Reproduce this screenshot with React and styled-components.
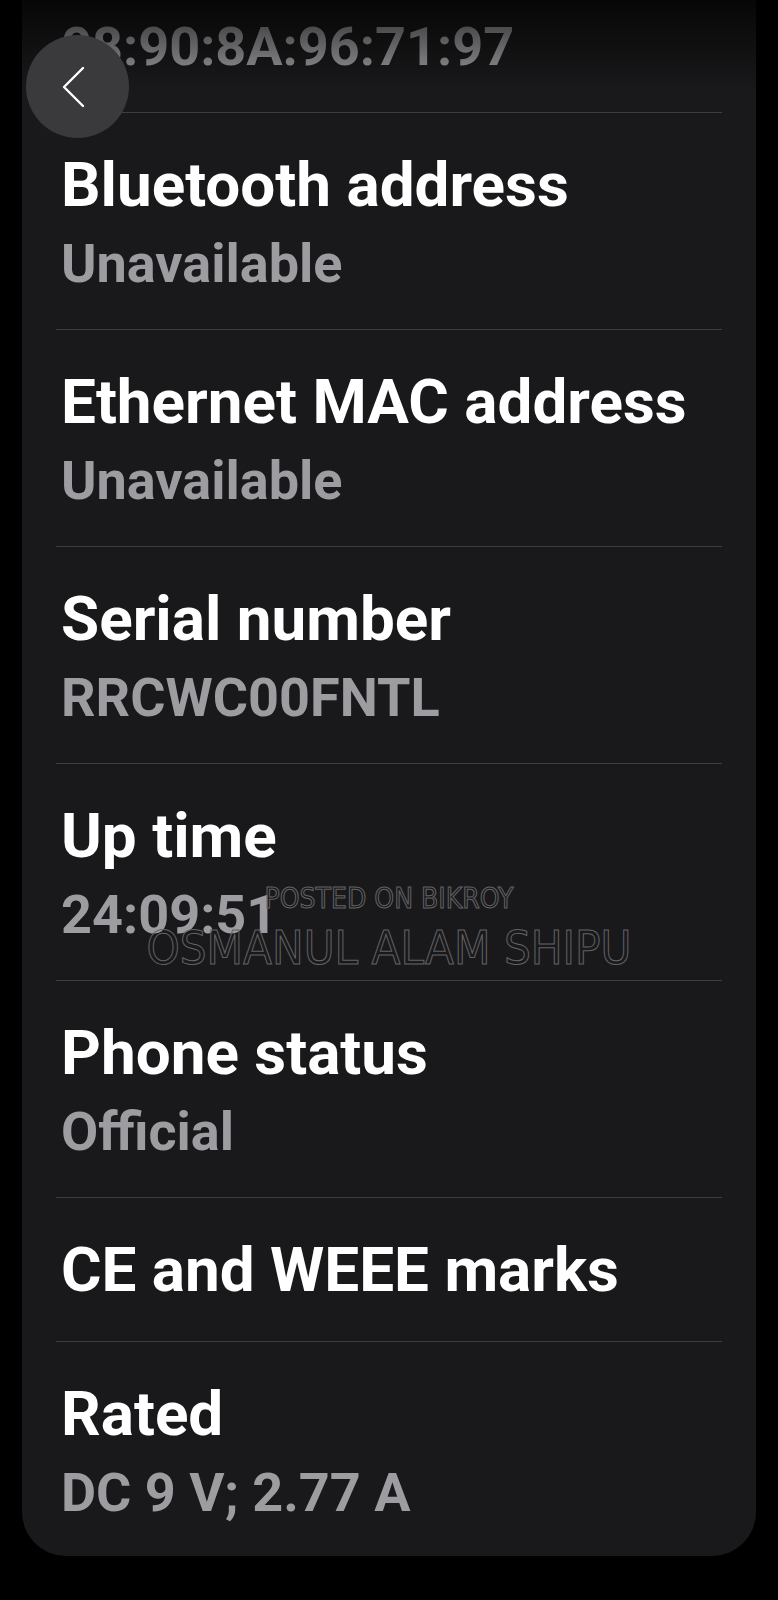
import React from 'react';
import styled, { createGlobalStyle } from 'styled-components';

const GlobalStyle = createGlobalStyle`
  html, body {
    margin: 0;
    padding: 0;
    background: #000;
    overflow: hidden;
  }
  body {
    font-family: Roboto, "Noto Sans", sans-serif;
  }
`;

const rows = [
  { title: 'Wi-Fi MAC address', value: '08:90:8A:96:71:97' },
  { title: 'Bluetooth address', value: 'Unavailable' },
  { title: 'Ethernet MAC address', value: 'Unavailable' },
  { title: 'Serial number', value: 'RRCWC00FNTL' },
  { title: 'Up time', value: '24:09:51' },
  { title: 'Phone status', value: 'Official' },
  { title: 'CE and WEEE marks' },
  { title: 'Rated', value: 'DC 9 V; 2.77 A' },
];

function App() {
  return (
    <>
      <GlobalStyle />
      <Screen>
        <Card>
          {rows.map((row, i) => (
            <Row key={row.title} divider={i > 0} single={!row.value}>
              <Title>{row.title}</Title>
              {row.value && <Value>{row.value}</Value>}
            </Row>
          ))}
        </Card>
        <TopFade />
        <BackButton aria-label="Back">
          <svg width="24" height="42" viewBox="0 0 24 42" fill="none">
            <path d="M21 2 L2 21 L21 40" stroke="#fff" strokeWidth="2.4" strokeLinecap="round" strokeLinejoin="round" />
          </svg>
        </BackButton>
        <Watermark>
          <small>POSTED ON BIKROY</small>
          <big>OSMANUL ALAM SHIPU</big>
        </Watermark>
      </Screen>
    </>
  );
}

export default App;

const Screen = styled.div`
  position: relative;
  width: 778px;
  height: 1600px;
  overflow: hidden;
  background: #000;
`;

// list is scrolled: first row sits partly above the top
const Card = styled.div`
  margin: -105px 22px 0 22px;
  padding: 0 34px 0 34px;
  background: #19191b;
  border-radius: 0 0 44px 44px;
`;

const Row = styled.div`
  padding: 35px 0 ${({ single }) => (single ? '34px' : '33px')} 0;
  border-top: ${({ divider }) => (divider ? '1px solid #3d3d40' : '1px solid transparent')};

  &:last-child {
    padding-bottom: 31px;
  }
`;

const Title = styled.div`
  margin-left: 5px;
  color: #fff;
  font-size: 62px;
  line-height: 74px;
  font-weight: 700;
`;

const Value = styled.div`
  margin: 10px 0 0 5px;
  color: #9d9da1;
  font-size: 54px;
  line-height: 64px;
  font-weight: 700;
`;

const TopFade = styled.div`
  position: absolute;
  top: 0;
  left: 0;
  right: 0;
  height: 90px;
  background: linear-gradient(to bottom, rgba(0, 0, 0, 0.75), rgba(0, 0, 0, 0));
  pointer-events: none;
`;

const BackButton = styled.button`
  position: absolute;
  top: 35px;
  left: 26px;
  width: 103px;
  height: 103px;
  border: none;
  border-radius: 50%;
  background: #3a3a3c;
  display: flex;
  align-items: center;
  justify-content: center;
  padding: 0 8px 0 0;
`;

const Watermark = styled.div`
  position: absolute;
  top: 882px;
  left: 0;
  right: 0;
  display: flex;
  flex-direction: column;
  align-items: center;
  font-family: "DejaVu Sans", sans-serif;
  font-stretch: condensed;
  color: transparent;
  -webkit-text-stroke: 1px #626264;
  pointer-events: none;

  small {
    font-size: 28px;
    line-height: 34px;
  }

  big {
    font-size: 47px;
    line-height: 64px;
  }
`;
